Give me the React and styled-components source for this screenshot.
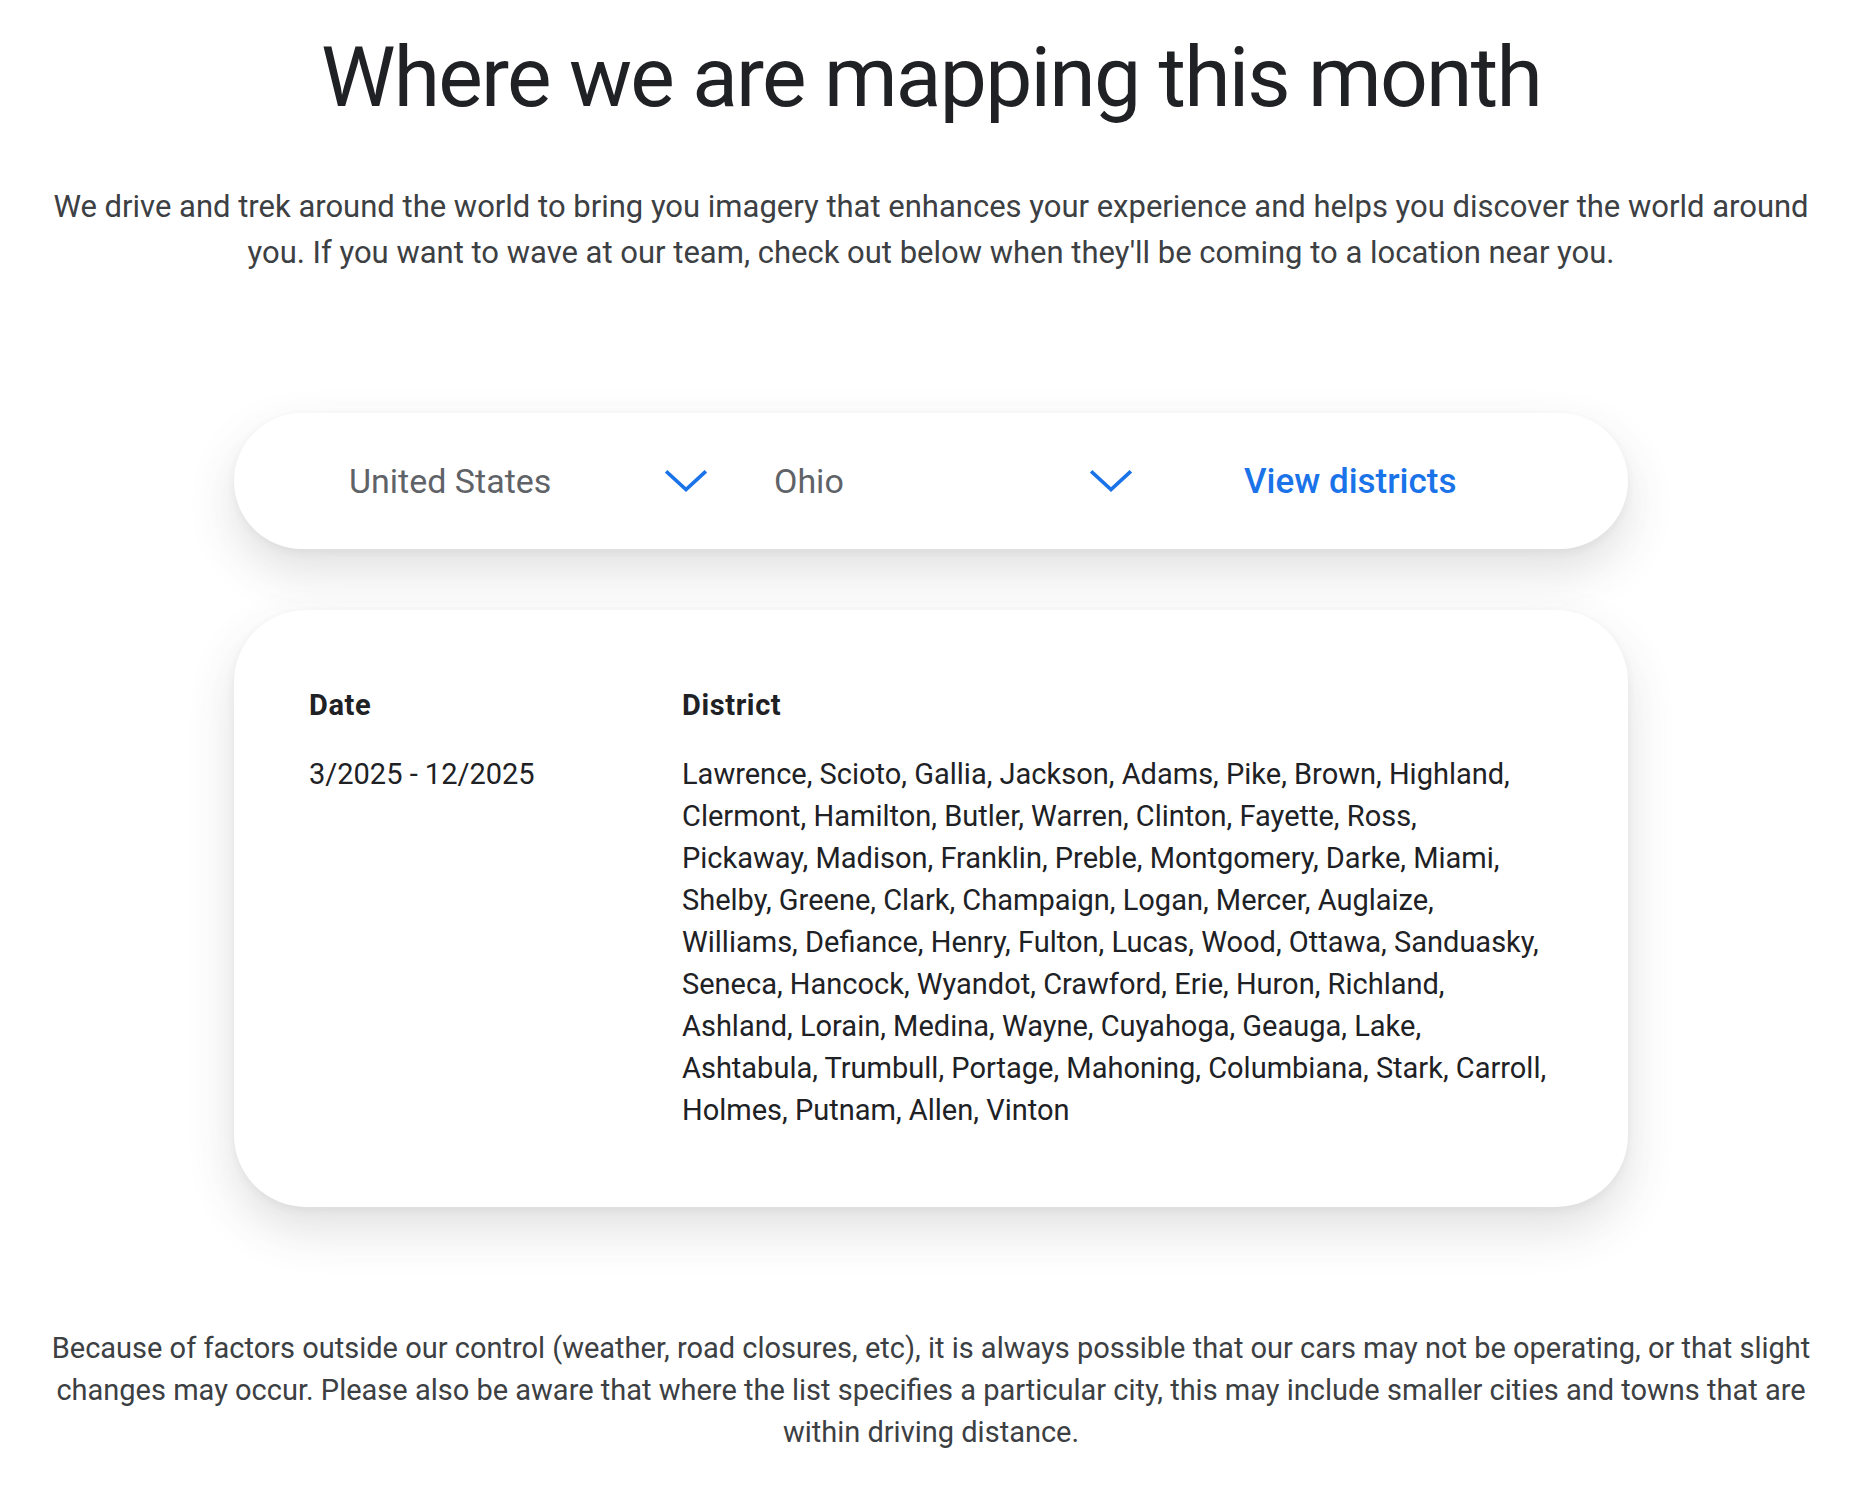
import React from 'react'
import styled, { createGlobalStyle } from 'styled-components'

const GlobalStyle = createGlobalStyle`
    body {
        margin: 0;
        background: #ffffff;
        font-family: Roboto, "Liberation Sans", sans-serif;
        color: #202124;
    }
`

const districtLines = [
    'Lawrence, Scioto, Gallia, Jackson, Adams, Pike, Brown, Highland,',
    'Clermont, Hamilton, Butler, Warren, Clinton, Fayette, Ross,',
    'Pickaway, Madison, Franklin, Preble, Montgomery, Darke, Miami,',
    'Shelby, Greene, Clark, Champaign, Logan, Mercer, Auglaize,',
    'Williams, Defiance, Henry, Fulton, Lucas, Wood, Ottawa, Sanduasky,',
    'Seneca, Hancock, Wyandot, Crawford, Erie, Huron, Richland,',
    'Ashland, Lorain, Medina, Wayne, Cuyahoga, Geauga, Lake,',
    'Ashtabula, Trumbull, Portage, Mahoning, Columbiana, Stark, Carroll,',
    'Holmes, Putnam, Allen, Vinton',
]

function Chevron() {
    return (
        <ChevronIcon viewBox="0 0 42 22" aria-hidden="true">
            <path d="M2.5 2.5 L21 19.5 L39.5 2.5" />
        </ChevronIcon>
    )
}

function Dropdown(props) {
    return (
        <Select>
            <SelectLabel>{props.label}</SelectLabel>
            <Chevron />
        </Select>
    )
}

function App() {
    return (
        <Page>
            <GlobalStyle />
            <Title>Where we are mapping this month</Title>
            <Intro>
                We drive and trek around the world to bring you imagery that enhances your experience and helps you discover the world around
                <br />
                you. If you want to wave at our team, check out below when they'll be coming to a location near you.
            </Intro>

            <FilterBar>
                <Dropdown label="United States" />
                <Dropdown label="Ohio" />
                <ViewLink>View districts</ViewLink>
            </FilterBar>

            <Card>
                <Row>
                    <HeadCell>Date</HeadCell>
                    <HeadCell>District</HeadCell>
                </Row>
                <Row>
                    <Cell>3/2025 - 12/2025</Cell>
                    <Cell>
                        {districtLines.map(line => (
                            <Line key={line}>{line}</Line>
                        ))}
                    </Cell>
                </Row>
            </Card>

            <Note>
                Because of factors outside our control (weather, road closures, etc), it is always possible that our cars may not be operating, or that slight
                <br />
                changes may occur. Please also be aware that where the list specifies a particular city, this may include smaller cities and towns that are
                <br />
                within driving distance.
            </Note>
        </Page>
    )
}

export default App

const Page = styled.div`
    display:flex;
    flex-direction:column;
    align-items:center;
    padding:28px 0 40px;
`

const Title = styled.h1`
    margin:0;
    font-size:84px;
    line-height:100px;
    font-weight:400;
    letter-spacing:-1.75px;
    color:#202124;
    text-align:center;
`

const Intro = styled.p`
    margin:56px 0 0;
    font-size:31px;
    line-height:46px;
    color:#3c4043;
    text-align:center;
    white-space:nowrap;
`

const FilterBar = styled.div`
    margin-top:137px;
    width:1394px;
    height:136px;
    box-sizing:border-box;
    padding:0 115px;
    display:flex;
    align-items:center;
    gap:67px;
    background:#fff;
    border-radius:68px;
    box-shadow:0 22px 48px rgba(60,64,67,0.16), 0 3px 8px rgba(60,64,67,0.06);
`

const Select = styled.div`
    width:358px;
    display:flex;
    align-items:center;
    justify-content:space-between;
    cursor:pointer;
`

const SelectLabel = styled.span`
    font-size:34px;
    color:#5f6368;
`

const ChevronIcon = styled.svg`
    width:42px;
    height:22px;
    fill:none;
    stroke:#1a73e8;
    stroke-width:3.6;
    stroke-linecap:square;
`

const ViewLink = styled.span`
    margin-left:45px;
    font-size:35px;
    font-weight:500;
    color:#1a73e8;
    cursor:pointer;
`

const Card = styled.div`
    margin-top:61px;
    width:1394px;
    box-sizing:border-box;
    padding:74px 75px 76px;
    background:#fff;
    border-radius:72px;
    box-shadow:0 22px 48px rgba(60,64,67,0.16), 0 3px 8px rgba(60,64,67,0.06);
    display:flex;
    flex-direction:column;
    gap:27px;
`

const Row = styled.div`
    display:grid;
    grid-template-columns:373px 1fr;
`

const HeadCell = styled.div`
    font-size:29px;
    line-height:42px;
    font-weight:700;
    letter-spacing:0.6px;
    color:#202124;
`

const Cell = styled.div`
    font-size:29px;
    line-height:42px;
    color:#202124;
`

const Line = styled.div`
    white-space:nowrap;
`

const Note = styled.p`
    margin:120px 0 0;
    font-size:29px;
    line-height:42px;
    color:#3c4043;
    text-align:center;
    white-space:nowrap;
`
